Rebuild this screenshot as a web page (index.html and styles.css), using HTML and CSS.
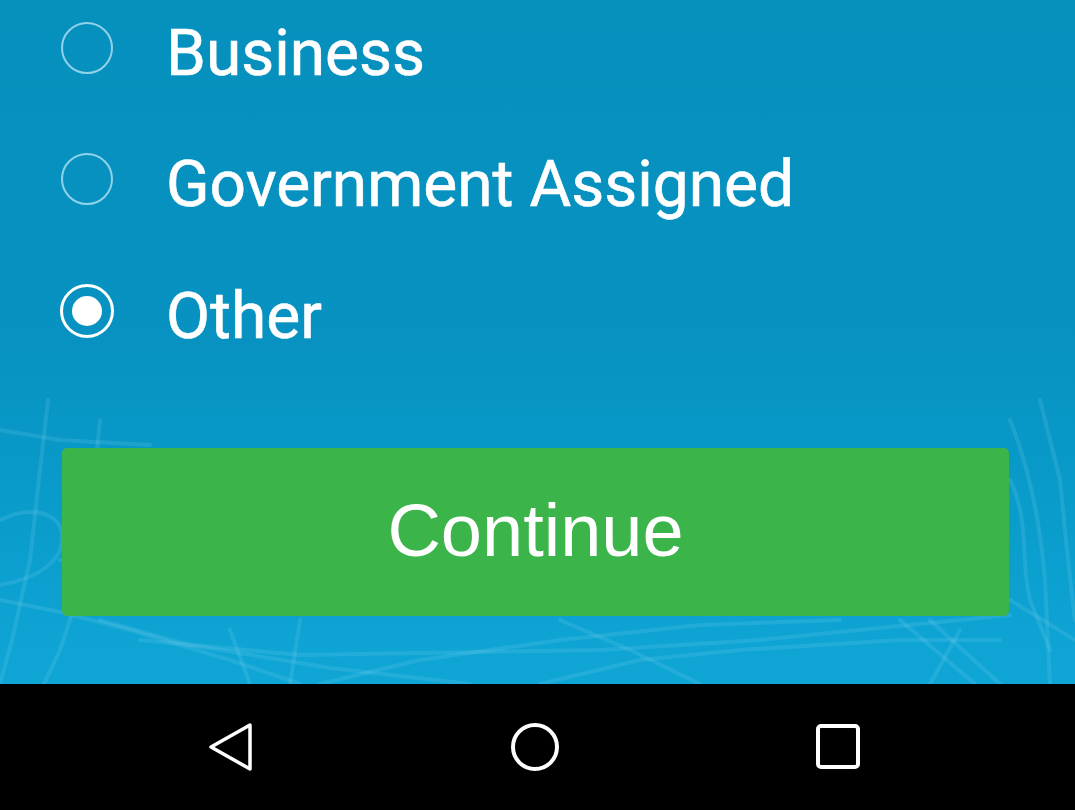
FILE: index.html
```html
<!DOCTYPE html>
<html lang="en">
<head>
<meta charset="utf-8">
<title>Select type</title>
<link rel="stylesheet" href="styles.css">
</head>
<body>
<div class="screen">
  <main class="content">
    <svg class="map" width="1075" height="684" viewBox="0 0 1075 684" aria-hidden="true">
      <g fill="none" stroke-linecap="round" stroke-linejoin="round">
        <path d="M48 400 L40 470 L30 560 L12 640 L0 684"/>
        <path d="M100 420 L92 500 L80 590 L60 650 L44 684"/>
        <path d="M0 430 L60 440 L150 445"/>
        <path d="M0 520 C30 505 60 512 62 535 C64 560 40 578 0 585"/>
        <path d="M0 600 L60 612 L130 630 L230 660 L300 684"/>
        <path d="M60 560 L140 575"/>
        <path d="M100 620 L190 645 L330 668 L470 684"/>
        <path d="M140 640 L300 655 L600 650 L760 640 L1010 615"/>
        <path d="M230 630 L250 684"/>
        <path d="M300 620 L290 684"/>
        <path d="M320 684 L420 660 L560 640 L700 625 L840 620"/>
        <path d="M540 684 L640 660 L740 650 L900 640 L1000 640"/>
        <path d="M560 620 L630 650 L700 684"/>
        <path d="M900 620 L975 684"/>
        <path d="M930 620 L1000 684"/>
        <path d="M960 630 L930 684"/>
        <path d="M1010 420 C1030 470 1040 520 1045 580 L1050 684"/>
        <path d="M1040 400 L1060 480 L1068 560 L1075 620"/>
        <path d="M1010 480 C1030 520 1020 560 1030 600 L1050 650"/>
        <path d="M1010 600 L1075 640"/>
      </g>
    </svg>

    <ul class="options">
      <li class="option">
        <span class="radio"></span>
        <span class="label">Business</span>
      </li>
      <li class="option">
        <span class="radio"></span>
        <span class="label">Government Assigned</span>
      </li>
      <li class="option">
        <span class="radio checked"></span>
        <span class="label">Other</span>
      </li>
    </ul>

    <button class="continue" type="button">Continue</button>
  </main>

  <nav class="navbar">
    <svg class="nav-icon" width="48" height="50" viewBox="0 0 48 50" aria-label="Back">
      <path d="M3 24 L42 2 L42 46 Z" fill="none" stroke="#fff" stroke-width="3.5" stroke-linejoin="round"/>
    </svg>
    <svg class="nav-icon" width="48" height="50" viewBox="0 0 48 50" aria-label="Home">
      <circle cx="24" cy="24" r="22" fill="none" stroke="#fff" stroke-width="4"/>
    </svg>
    <svg class="nav-icon" width="48" height="50" viewBox="0 0 48 50" aria-label="Recents">
      <rect x="4" y="3" width="40" height="41" rx="3" fill="none" stroke="#fff" stroke-width="4"/>
    </svg>
  </nav>
</div>
</body>
</html>
```

FILE: styles.css
```css
* {
  box-sizing: border-box;
}

html, body {
  margin: 0;
  padding: 0;
  background: #000;
}

.screen {
  width: 1075px;
  height: 810px;
  display: flex;
  flex-direction: column;
  overflow: hidden;
}

.content {
  position: relative;
  height: 684px;
  flex: none;
  display: flex;
  flex-direction: column;
  padding: 0 67px 0 61px;
  background: linear-gradient(180deg, #0590be 0%, #0792c1 50%, #099bca 72%, #0fa6d6 100%);
  overflow: hidden;
}

.map {
  position: absolute;
  left: 0;
  top: 0;
  stroke: rgba(140, 220, 245, 0.16);
  stroke-width: 4;
}

.options {
  position: relative;
  list-style: none;
  margin: -18px 0 0 0;
  padding: 0;
}

.option {
  height: 131.5px;
  display: flex;
  align-items: center;
  gap: 53px;
}

.radio {
  flex: none;
  width: 52px;
  height: 52px;
  border-radius: 50%;
  border: 2px solid rgba(190, 232, 248, 0.75);
  display: flex;
  align-items: center;
  justify-content: center;
}

.radio.checked {
  width: 54px;
  height: 54px;
  margin-left: -1px;
  margin-right: -1px;
  border: 3.5px solid #fff;
}

.radio.checked::after {
  content: "";
  width: 30px;
  height: 30px;
  border-radius: 50%;
  background: #fff;
}

.label {
  margin-top: 11px;
  font-family: Roboto, "Noto Sans", sans-serif;
  font-size: 64px;
  line-height: 75px;
  color: #fff;
  white-space: nowrap;
  -webkit-text-stroke: 0.6px #fff;
}

.continue {
  position: relative;
  margin-top: 71px;
  margin-left: 1px;
  height: 168px;
  width: 947px;
  border: none;
  border-radius: 5px;
  background: #3bb54a;
  color: #fff;
  font-family: "Liberation Sans", Arial, sans-serif;
  font-size: 74px;
  line-height: 1;
  padding: 0 0 2px 0;
  cursor: pointer;
}

.navbar {
  flex: none;
  height: 126px;
  background: #000;
  display: flex;
  align-items: center;
  justify-content: center;
  gap: 255px;
  padding: 0 5px 0 0;
}

.nav-icon {
  display: block;
  flex: none;
  margin-top: 2px;
}
```
